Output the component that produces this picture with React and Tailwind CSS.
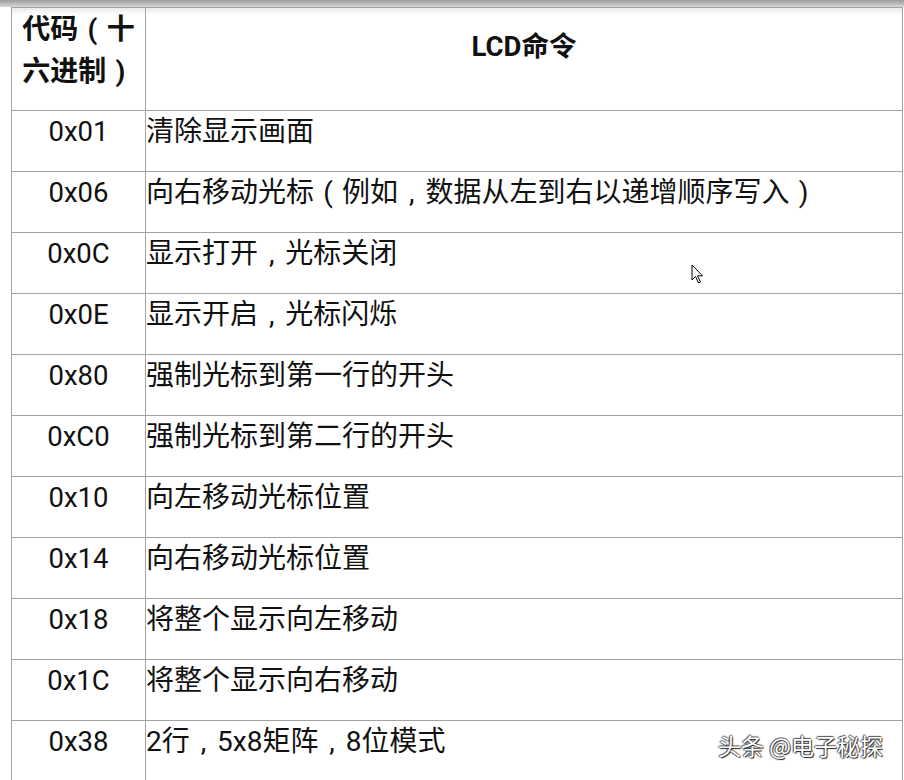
import React from "react";

const rows = [
  ["0x01", "清除显示画面"],
  ["0x06", "向右移动光标（例如，数据从左到右以递增顺序写入）"],
  ["0x0C", "显示打开，光标关闭"],
  ["0x0E", "显示开启，光标闪烁"],
  ["0x80", "强制光标到第一行的开头"],
  ["0xC0", "强制光标到第二行的开头"],
  ["0x10", "向左移动光标位置"],
  ["0x14", "向右移动光标位置"],
  ["0x18", "将整个显示向左移动"],
  ["0x1C", "将整个显示向右移动"],
  ["0x38", "2行，5x8矩阵，8位模式"],
];

// full-width punctuation drawn centred in its one-em cell (ascii glyph + padding)
const punct = {
  "，": { ch: ",", cls: "px-[0.39em]" },
  "（": { ch: "(", cls: "px-[0.33em]" },
  "）": { ch: ")", cls: "px-[0.33em]" },
};

const Zh = ({ text }) =>
  text.split(/([，（）])/).map((part, i) =>
    punct[part] ? (
      <span key={i} className={punct[part].cls}>
        {punct[part].ch}
      </span>
    ) : (
      <React.Fragment key={i}>{part}</React.Fragment>
    )
  );

const Cursor = () => (
  <svg width="14" height="21" viewBox="0 0 14 21" className="absolute left-[691px] top-[264px]">
    <path
      d="M1 1 L1 16 L4.5 12.5 L7.5 19 L9.5 18 L6.5 11.8 L11.5 11.8 Z"
      fill="#fff"
      stroke="#000"
      strokeWidth="1"
      strokeLinejoin="round"
    />
  </svg>
);

export default function App() {
  return (
    <div
      className="relative w-[904px] h-[780px] overflow-hidden bg-white text-[#111]"
      style={{ fontFamily: 'Roboto, "Noto Sans CJK SC", sans-serif' }}
    >
      {/* top shade */}
      <div className="h-[7px] bg-gradient-to-b from-[#9c9c9c] to-[#d8d8d8]" />

      {/* table */}
      <div className="ml-[11px] w-[892px] border-x border-t border-[#a3a3a3] shadow-[inset_0_7px_6px_-5px_rgba(0,0,0,0.12)]">
        <div className="grid grid-cols-[134px_1fr] text-[27.5px] leading-[42px]">
          <div className="h-[103px] border-r border-b border-[#a3a3a3] pt-px px-[9px] text-center text-[28px] font-bold">
            <div>
              代码<Zh text="（" />十
            </div>
            <div>
              六进制<Zh text="）" />
            </div>
          </div>
          <div className="h-[103px] border-b border-[#a3a3a3] pt-[18px] text-center font-bold">
            LCD命令
          </div>
          {rows.map(([code, text]) => (
            <React.Fragment key={code}>
              <div className="h-[61px] border-r border-b border-[#a3a3a3] text-center">
                {code}
              </div>
              <div className="h-[61px] border-b border-[#a3a3a3] whitespace-nowrap text-[28px]">
                <Zh text={text} />
              </div>
            </React.Fragment>
          ))}
        </div>
      </div>

      <Cursor />

      {/* watermark */}
      <div
        className="absolute left-[718px] top-[730px] text-[23px] leading-[30px] text-white [text-shadow:1px_1px_1px_#222,-1px_0_1px_#444,0_-1px_1px_#555]"
        style={{ fontFamily: '"Noto Sans CJK SC", sans-serif' }}
      >
        头条 @电子秘探
      </div>
    </div>
  );
}
